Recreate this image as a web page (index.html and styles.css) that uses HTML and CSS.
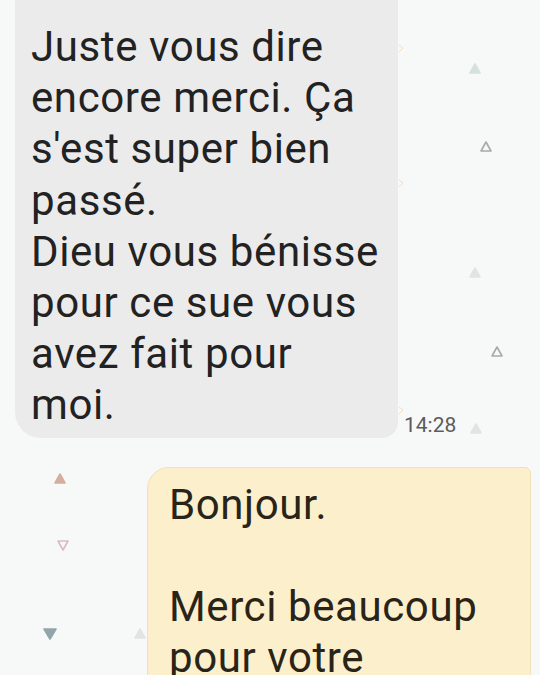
FILE: index.html
```html
<!DOCTYPE html>
<html lang="fr">
<head>
<meta charset="utf-8">
<title>Conversation</title>
<link rel="stylesheet" href="styles.css">
</head>
<body>
<svg class="pattern" width="540" height="675" viewBox="0 0 540 675" aria-hidden="true">
  <polygon class="tri fill-teal" points="475,64 480,73 470,73"/>
  <polygon class="tri line-grey" points="486,142 491,151 481,151"/>
  <polygon class="tri fill-pale" points="475,268 480,277 470,277"/>
  <polygon class="tri line-grey" points="497,347 502,356 492,356"/>
  <polygon class="tri fill-pale" points="476,424 481,433 471,433"/>
  <polygon class="tri fill-tan" points="60,474 65,483 55,483"/>
  <polygon class="tri line-pink" points="58,541 68,541 63,550"/>
  <polygon class="tri fill-blue" points="44,629 56,629 50,639"/>
  <polygon class="tri fill-pale" points="140,629 145,638 135,638"/>
  <path class="tick" d="M399 45 L403 48 L399 52"/>
  <path class="tick" d="M399 180 L403 183 L399 187"/>
  <path class="tick" d="M399 407 L403 410 L399 414"/>
</svg>
<main class="thread">
  <div class="row row-in">
    <div class="bubble bubble-in">Juste vous dire<br>encore merci. Ça<br>s'est super bien<br>passé.<br>Dieu vous bénisse<br>pour ce sue vous<br>avez fait pour<br>moi.</div>
    <span class="time">14:28</span>
  </div>
  <div class="row row-out">
    <div class="bubble bubble-out">Bonjour.<br><br>Merci beaucoup<br>pour votre</div>
  </div>
</main>
</body>
</html>
```
FILE: styles.css
```css
html, body {
  margin: 0;
  padding: 0;
}
body {
  width: 540px;
  height: 675px;
  overflow: hidden;
  position: relative;
  background: #f7f8f8;
  font-family: Roboto, "Noto Sans", "Liberation Sans", sans-serif;
}
.pattern {
  position: absolute;
  left: 0;
  top: 0;
  z-index: 0;
}
.tri { stroke-width: 1.6; stroke-linejoin: round; }
.fill-teal { fill: #d5e1df; stroke: #d5e1df; }
.fill-pale { fill: #e1e4e4; stroke: #e1e4e4; }
.fill-tan { fill: #d6ae9d; stroke: #d6ae9d; }
.fill-blue { fill: #92a5a9; stroke: #92a5a9; }
.line-grey { fill: none; stroke: #a3acab; }
.line-pink { fill: none; stroke: #dbbcbc; }
.tick { fill: none; stroke: #f5ddc4; stroke-width: 1; }

.thread {
  position: relative;
  z-index: 1;
  margin-top: -23px;
  padding-left: 15px;
  display: flex;
  flex-direction: column;
  gap: 29px;
}
.row {
  display: flex;
  align-items: flex-end;
  gap: 6px;
}
.bubble {
  box-sizing: border-box;
  font-size: 42px;
  line-height: 51.2px;
  letter-spacing: 0.6px;
}
.bubble-in {
  width: 383px;
  padding: 44px 12px 7px 16px;
  background: #ebebeb;
  color: #222222;
  border-radius: 22px 22px 16px 26px;
}
.time {
  font-size: 21px;
  line-height: 22px;
  color: #5c5c5c;
  margin-bottom: 2px;
}
.row-out {
  padding-left: 132px;
}
.bubble-out {
  width: 384px;
  min-height: 260px;
  padding: 11px 20px 0 21px;
  background: #fcefcb;
  color: #2a2418;
  border: 1px solid #f1e1b9;
  border-radius: 22px 6px 0 0;
}
```
